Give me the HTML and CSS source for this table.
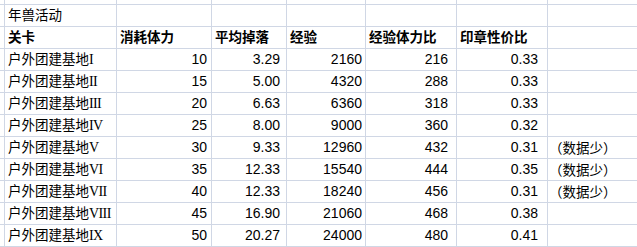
FILE: index.html
```html
<!DOCTYPE html>
<html lang="zh-CN">
<head>
<meta charset="utf-8">
<title>年兽活动</title>
<link rel="stylesheet" href="styles.css">
</head>
<body>
<div class="sheet">
  <div class="row edge"><div></div><div></div><div></div><div></div><div></div><div></div><div></div><div></div></div>
  <div class="row"><div></div><div class="t">年兽活动</div><div></div><div></div><div></div><div></div><div></div><div></div></div>
  <div class="row head"><div></div><div class="t">关卡</div><div class="t">消耗体力</div><div class="t">平均掉落</div><div class="t">经验</div><div class="t">经验体力比</div><div class="t">印章性价比</div><div></div></div>
  <div class="row"><div></div><div class="t">户外团建基地<span class="rn">I</span></div><div class="n c2">10</div><div class="n c3">3.29</div><div class="n c4">2160</div><div class="n c5">216</div><div class="n c6">0.33</div><div></div></div>
  <div class="row"><div></div><div class="t">户外团建基地<span class="rn">II</span></div><div class="n c2">15</div><div class="n c3">5.00</div><div class="n c4">4320</div><div class="n c5">288</div><div class="n c6">0.33</div><div></div></div>
  <div class="row"><div></div><div class="t">户外团建基地<span class="rn">III</span></div><div class="n c2">20</div><div class="n c3">6.63</div><div class="n c4">6360</div><div class="n c5">318</div><div class="n c6">0.33</div><div></div></div>
  <div class="row"><div></div><div class="t">户外团建基地<span class="rn">IV</span></div><div class="n c2">25</div><div class="n c3">8.00</div><div class="n c4">9000</div><div class="n c5">360</div><div class="n c6">0.32</div><div></div></div>
  <div class="row"><div></div><div class="t">户外团建基地<span class="rn">V</span></div><div class="n c2">30</div><div class="n c3">9.33</div><div class="n c4">12960</div><div class="n c5">432</div><div class="n c6">0.31</div><div class="t note">（数据少）</div></div>
  <div class="row"><div></div><div class="t">户外团建基地<span class="rn">VI</span></div><div class="n c2">35</div><div class="n c3">12.33</div><div class="n c4">15540</div><div class="n c5">444</div><div class="n c6">0.35</div><div class="t note">（数据少）</div></div>
  <div class="row"><div></div><div class="t">户外团建基地<span class="rn">VII</span></div><div class="n c2">40</div><div class="n c3">12.33</div><div class="n c4">18240</div><div class="n c5">456</div><div class="n c6">0.31</div><div class="t note">（数据少）</div></div>
  <div class="row"><div></div><div class="t">户外团建基地<span class="rn">VIII</span></div><div class="n c2">45</div><div class="n c3">16.90</div><div class="n c4">21060</div><div class="n c5">468</div><div class="n c6">0.38</div><div></div></div>
  <div class="row"><div></div><div class="t">户外团建基地<span class="rn">IX</span></div><div class="n c2">50</div><div class="n c3">20.27</div><div class="n c4">24000</div><div class="n c5">480</div><div class="n c6">0.41</div><div></div></div>
  <div class="row"><div></div><div></div><div></div><div></div><div></div><div></div><div></div><div></div></div>
</div>
</body>
</html>
```
FILE: styles.css
```css
html, body {
  margin: 0;
  padding: 0;
  background: #ffffff;
  overflow: hidden;
}
body {
  width: 637px;
  height: 247px;
}
.sheet {
  display: grid;
  grid-template-columns: 4px 111px 94px 74px 78px 90px 90px 100px;
  grid-template-rows: 4px repeat(11, 21px) 0px;
  gap: 1px;
  background: #d0d7e5;
  width: max-content;
  font-family: "Liberation Sans", "Noto Sans CJK SC", sans-serif;
  font-size: 13.5px;
  color: #000000;
}
.row {
  display: contents;
}
.row > div {
  background: #ffffff;
  display: flex;
  align-items: center;
  white-space: nowrap;
  overflow: hidden;
  line-height: 21px;
}
.t {
  padding-left: 3px;
}
.n {
  justify-content: flex-end;
  font-size: 14px;
}
.c2 { padding-right: 4px; }
.c3 { padding-right: 6px; }
.c4 { padding-right: 3px; }
.c5 { padding-right: 8px; }
.c6 { padding-right: 9px; }
.head > div {
  font-weight: bold;
}
.rn {
  font-family: "Liberation Serif", serif;
  font-size: 14px;
  letter-spacing: -0.6px;
}
.note {
  font-family: "Noto Sans CJK KR", sans-serif;
  padding-left: 1px;
}
```
